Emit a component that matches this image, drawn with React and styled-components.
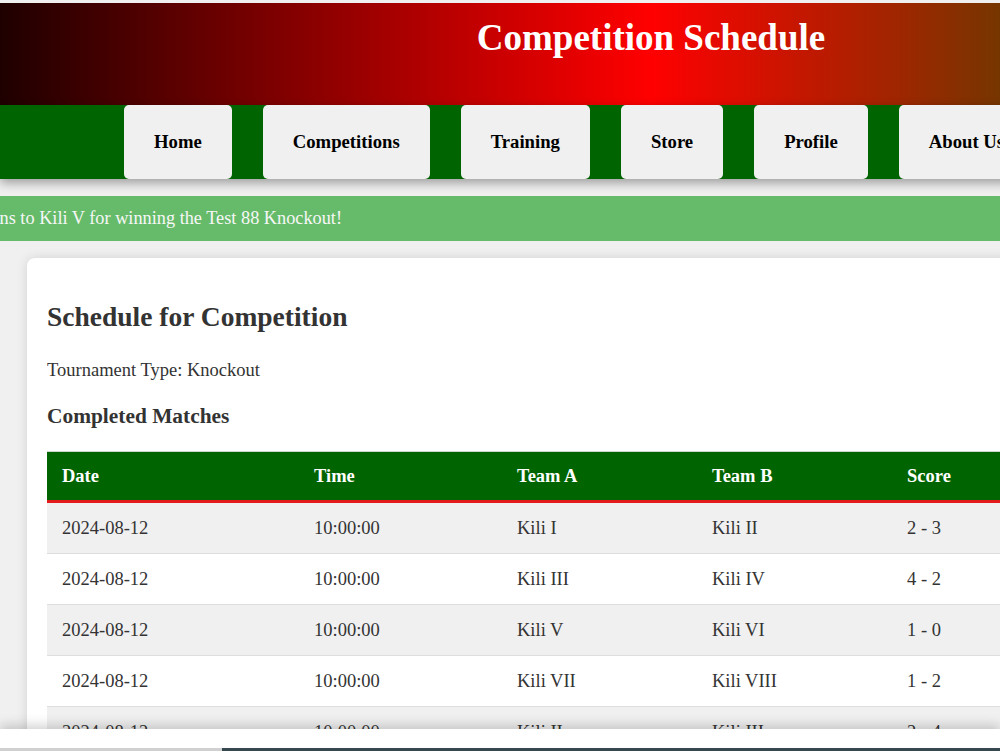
import styled, { createGlobalStyle } from "styled-components";

const GlobalStyle = createGlobalStyle`
  html, body {
    margin: 0;
    padding: 0;
    overflow: hidden;
    background: #f0f0f0;
    font-family: "Liberation Serif", "Times New Roman", serif;
    color: #333;
  }
`;

const navItems = ["Home", "Competitions", "Training", "Store", "Profile", "About Us", "Logout"];

const matches = [
  { date: "2024-08-12", time: "10:00:00", teamA: "Kili I", teamB: "Kili II", score: "2 - 3" },
  { date: "2024-08-12", time: "10:00:00", teamA: "Kili III", teamB: "Kili IV", score: "4 - 2" },
  { date: "2024-08-12", time: "10:00:00", teamA: "Kili V", teamB: "Kili VI", score: "1 - 0" },
  { date: "2024-08-12", time: "10:00:00", teamA: "Kili VII", teamB: "Kili VIII", score: "1 - 2" },
  { date: "2024-08-12", time: "10:00:00", teamA: "Kili II", teamB: "Kili III", score: "2 - 4" },
  { date: "2024-08-12", time: "10:00:00", teamA: "Kili V", teamB: "Kili VII", score: "3 - 1" },
];

const Page = styled.div`
  width: 1302px;
  padding-top: 3px;
`;

const Header = styled.header`
  height: 102px;
  box-sizing: border-box;
  padding-top: 13px;
  background: linear-gradient(to right, #1f0000, #ff0000, #006400);
  text-align: center;
`;

const Title = styled.h1`
  margin: 0;
  font-size: 37px;
  line-height: 44px;
  font-weight: bold;
  color: #fff;
`;

const Nav = styled.nav`
  display: flex;
  gap: 31px;
  height: 74px;
  padding-left: 124px;
  background: #006400;
  box-shadow: 0 4px 10px rgba(0, 0, 0, 0.35);
`;

const NavButton = styled.a`
  display: flex;
  align-items: center;
  padding: 0 30px;
  background: #f0f0f0;
  border-radius: 5px;
  color: #000;
  font-size: 18.7px;
  font-weight: bold;
  text-decoration: none;
  white-space: nowrap;
`;

const Ticker = styled.div`
  margin-top: 17px;
  height: 45px;
  display: flex;
  align-items: center;
  overflow: hidden;
  background: #66bb6a;
  color: #f7f7f7;
  font-size: 18.3px;
  white-space: nowrap;
`;

const TickerText = styled.span`
  transform: translateX(-101px);
`;

const Card = styled.main`
  margin: 17px 27px 40px;
  padding: 20px;
  background: #fff;
  border-radius: 8px;
  box-shadow: 0 0 12px rgba(0, 0, 0, 0.12);
`;

const Heading = styled.h2`
  margin: 23px 0 28px;
  font-size: 27.5px;
  line-height: 31px;
  font-weight: bold;
  color: #333;
`;

const Info = styled.p`
  margin: 0 0 23px;
  font-size: 18.5px;
  line-height: 21px;
`;

const SubHeading = styled.h3`
  margin: 0 0 22px;
  font-size: 21.4px;
  line-height: 25px;
  font-weight: bold;
`;

const Table = styled.table`
  width: 100%;
  border-collapse: collapse;
  font-size: 18.5px;
  line-height: 21px;
`;

const Th = styled.th`
  width: ${(p) => p.$w || "auto"};
  padding: 14px 15px 13px;
  text-align: left;
  font-weight: bold;
  color: #fff;
  background: #006400;
  border-top: 1px solid #cfd8cf;
  border-bottom: 3px solid #e31b1b;
`;

const Row = styled.tr`
  background: ${(p) => (p.$shade ? "#f0f0f0" : "#fff")};
  border-bottom: 1px solid #ddd;
`;

const Td = styled.td`
  padding: 15px 15px 14px;
  color: #333;
`;

const Footer = styled.footer`
  position: fixed;
  left: 0;
  right: 0;
  bottom: 0;
  height: 22px;
  display: flex;
  flex-direction: column;
  justify-content: flex-end;
  background: #fff;
  box-shadow: 0 -4px 12px rgba(0, 0, 0, 0.18);
`;

const FooterEdge = styled.div`
  display: flex;
  height: 3px;
`;

const EdgePart = styled.div`
  width: ${(p) => p.$w || "auto"};
  flex: ${(p) => (p.$w ? "none" : 1)};
  background: ${(p) => p.$color};
`;

export default function App() {
  return (
    <>
      <GlobalStyle />
      <Page>
        <Header>
          <Title>Competition Schedule</Title>
        </Header>
        <Nav>
          {navItems.map((item) => (
            <NavButton key={item} href="#">
              {item}
            </NavButton>
          ))}
        </Nav>
        <Ticker>
          <TickerText>Congratulations to Kili V for winning the Test 88 Knockout!</TickerText>
        </Ticker>
        <Card>
          <Heading>Schedule for Competition</Heading>
          <Info>Tournament Type: Knockout</Info>
          <SubHeading>Completed Matches</SubHeading>
          <Table>
            <thead>
              <tr>
                <Th $w="222px">Date</Th>
                <Th $w="173px">Time</Th>
                <Th $w="165px">Team A</Th>
                <Th $w="165px">Team B</Th>
                <Th>Score</Th>
              </tr>
            </thead>
            <tbody>
              {matches.map((m, i) => (
                <Row key={i} $shade={i % 2 === 0}>
                  <Td>{m.date}</Td>
                  <Td>{m.time}</Td>
                  <Td>{m.teamA}</Td>
                  <Td>{m.teamB}</Td>
                  <Td>{m.score}</Td>
                </Row>
              ))}
            </tbody>
          </Table>
        </Card>
      </Page>
      <Footer>
        <FooterEdge>
          <EdgePart $w="222px" $color="#d0d0d0" />
          <EdgePart $color="#37474f" />
        </FooterEdge>
      </Footer>
    </>
  );
}
